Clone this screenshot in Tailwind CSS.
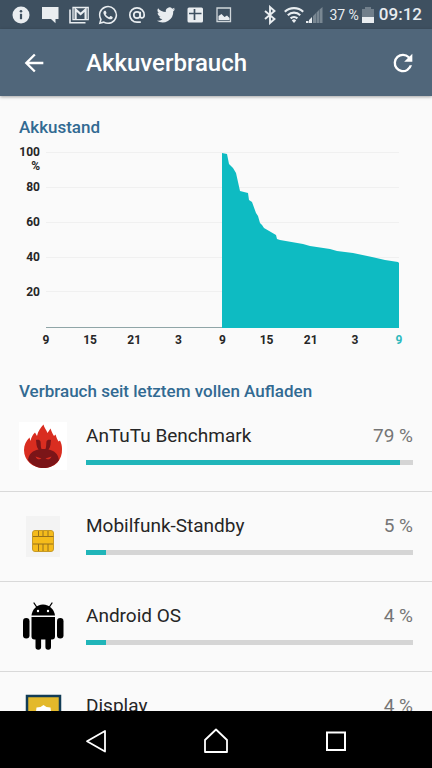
<!DOCTYPE html>
<html lang="de">
<head>
<meta charset="utf-8">
<meta name="viewport" content="width=device-width, initial-scale=1">
<title>Akkuverbrauch</title>
<script src="https://cdn.jsdelivr.net/npm/@tailwindcss/browser@4"></script>
</head>
<body class="flex h-screen flex-col overflow-hidden bg-[#fafafa] font-['Roboto',sans-serif] text-[#262626]">

<!-- Status bar -->
<div class="flex h-[29px] shrink-0 items-center justify-between bg-[#3e5060] pr-[10px] pl-[11px] text-[#e9edf0]">
  <div class="flex items-center gap-[9px]">
    <svg class="size-5" viewBox="0 0 20 20"><circle cx="10" cy="10" r="8.500" fill="currentColor"/><circle cx="10" cy="6.200" r="1.300" fill="#3e5060"/><path d="M8.900 8.800h2.200v5.400H8.900z" fill="#3e5060"/></svg>
    <svg class="size-5" viewBox="0 0 20 20" fill="currentColor"><path d="M2 2h16.500v12H15.500v4.200L11 14H2z"/></svg>
    <svg class="size-5" viewBox="0 0 20 20" fill="none" stroke="currentColor"><path d="M1 4.500v13.200h15.500" stroke-width="1.600"/><path d="M4 2.500h15.200v12.200H4z" stroke-width="1.300"/><path d="M6.600 14.500V4.500l5 4.500 5-4.500v10" stroke-width="2.200"/></svg>
    <svg class="size-5" viewBox="-1 -1 26 26" fill="currentColor"><path d="M17.470 14.380c-.3-.15-1.760-.87-2.030-.97-.27-.1-.47-.15-.67.150-.2.300-.77.970-.94 1.160-.17.200-.35.220-.64.080-.3-.15-1.260-.46-2.390-1.480-.88-.79-1.480-1.760-1.650-2.060-.17-.3-.02-.46.130-.61.130-.13.300-.35.450-.52.150-.17.200-.3.300-.5.100-.2.050-.37-.03-.52-.07-.15-.67-1.610-.92-2.210-.24-.58-.49-.5-.67-.51l-.57-.01c-.2 0-.52.070-.79.370-.27.300-1.040 1.020-1.040 2.480s1.070 2.880 1.210 3.070c.15.200 2.100 3.200 5.080 4.490.71.300 1.260.490 1.690.620.71.230 1.360.200 1.870.120.570-.09 1.760-.72 2.010-1.410.25-.69.250-1.290.170-1.410-.07-.13-.27-.2-.57-.35M12.050 21.790a9.870 9.870 0 0 1-5.030-1.380l-.36-.21-3.740.980 1-3.650-.24-.37a9.860 9.860 0 1 1 8.370 4.630M20.460 3.490A11.820 11.820 0 0 0 12.050 0C5.500 0 .160 5.330.160 11.890c0 2.100.55 4.140 1.590 5.950L.060 24l6.300-1.650a11.880 11.880 0 0 0 5.680 1.450c6.550 0 11.890-5.330 11.890-11.890a11.820 11.820 0 0 0-3.480-8.410z"/></svg>
    <svg class="size-5" viewBox="0 0 20 20" fill="none" stroke="currentColor" stroke-width="1.700"><circle cx="10" cy="10" r="3.200"/><path d="M13.200 6.800v4.200c0 2.800 4 2.600 4-1a7.200 7.200 0 1 0-7.200 7.200h3.800"/></svg>
    <svg class="size-5" viewBox="0 0 24 24" fill="currentColor"><path d="M23 5.100a9 9 0 0 1-2.600.7 4.500 4.500 0 0 0 2-2.500 9 9 0 0 1-2.900 1.100 4.500 4.500 0 0 0-7.700 4.100A12.800 12.800 0 0 1 2.500 3.800a4.500 4.500 0 0 0 1.400 6 4.500 4.500 0 0 1-2-.6c0 2.200 1.500 4.100 3.600 4.600a4.500 4.500 0 0 1-2 .1 4.500 4.500 0 0 0 4.200 3.100A9 9 0 0 1 1 18.900a12.800 12.800 0 0 0 19.700-11.400A9 9 0 0 0 23 5.100z"/></svg>
    <svg class="size-5" viewBox="0 0 20 20"><rect x="2.500" y="2.500" width="15.500" height="15" rx="1.500" fill="currentColor"/><path d="M9.500 4v11M4 8.500h12.500" stroke="#3e5060" stroke-width="1.700"/></svg>
    <svg class="size-5" viewBox="0 0 20 20"><path d="M3 3h13.500v13.500H3z" fill="none" stroke="currentColor" stroke-width="1.300" opacity=".85"/><path d="M4.500 15V11l3-2 3 3 2.500-1.500 2.500 2.500v2z" fill="currentColor"/></svg>
  </div>
  <div class="flex items-center">
    <svg class="mr-[6px] h-5 w-4" viewBox="0 0 16 20" fill="none" stroke="currentColor" stroke-width="1.900"><path d="M3 6l9.500 8L8 18V2l4.500 4L3 14"/></svg>
    <svg class="mr-[2px] size-5" viewBox="0 0 20 20" fill="none" stroke="currentColor" stroke-width="2.200"><path d="M.8 6.800a13.500 13.500 0 0 1 18.400 0M3.800 10.200a9 9 0 0 1 12.400 0M6.600 13.400a5 5 0 0 1 6.800 0"/><path d="M10 18l-2.200-2.500a3 3 0 0 1 4.400 0z" fill="currentColor" stroke="none"/></svg>
    <svg class="mr-[6px] h-5 w-[17px]" viewBox="0 0 17 20" fill="currentColor"><path d="M0 16h2.500v2H0zM3 15l3-3v6H3z"/><path d="M7 11l3-3v10H7zM10.500 7.500l2.500-2.500v13h-2.500zM13.500 4.500L16.500 2v16h-3z" opacity=".35"/></svg>
    <span class="mr-[3px] text-sm">37 %</span>
    <svg class="mr-[5px] h-5 w-3" viewBox="0 0 12 20" fill="currentColor"><path d="M3 2h6v2h3v8H0V4h3z" opacity=".3"/><path d="M0 12h12v6H0z"/></svg>
    <span class="text-[17px] font-medium">09:12</span>
  </div>
</div>

<!-- App bar -->
<header class="z-10 flex h-[67px] shrink-0 items-center bg-[#50667a] pr-[15px] pl-5 text-white shadow-[0_1px_3px_rgba(0,0,0,0.35)]">
  <button type="button" aria-label="Zurück" class="mr-[38px] flex size-7 items-center justify-center">
    <svg class="size-7" viewBox="0 0 24 24" fill="currentColor"><path d="M20 11H7.830l5.590-5.590L12 4l-8 8 8 8 1.410-1.410L7.830 13H20z"/></svg>
  </button>
  <h1 class="flex-1 text-2xl font-medium">Akkuverbrauch</h1>
  <button type="button" aria-label="Aktualisieren" class="flex size-7 items-center justify-center">
    <svg class="size-7" viewBox="0 0 24 24" fill="currentColor"><path d="M17.650 6.350A7.960 7.960 0 0 0 12 4a8 8 0 1 0 7.730 10h-2.080A6 6 0 1 1 12 6c1.660 0 3.140.69 4.220 1.780L13 11h7V4z"/></svg>
  </button>
</header>

<main class="min-h-0 flex-1 overflow-hidden">
  <section aria-labelledby="level" class="pt-5">
    <h2 id="level" class="px-[19px] text-[17px] leading-[22px] font-medium text-[#326a92]">Akkustand</h2>
    <div class="mt-[7px] flex pr-[33px] pl-[17px] text-xs leading-[14px] font-bold">
      <div class="w-[23px] shrink-0 text-right">
        <div class="h-[35px]">100<br>%</div>
        <div class="h-[35px]">80</div>
        <div class="h-[35px]">60</div>
        <div class="h-[35px]">40</div>
        <div class="h-[35px]">20</div>
      </div>
      <div class="ml-[6px] min-w-0 flex-1 pt-[7px]">
        <svg class="block h-[176px] w-full" viewBox="0 0 353 176" preserveAspectRatio="none" role="img" aria-label="Akkustand in Prozent">
          <path d="M0 .5h353M0 35.500h353M0 70.500h353M0 105.500h353M0 139.500h353" stroke="#f0f0f0"/>
          <path d="M0 175.500h353" stroke="#8fa5a7"/>
          <path d="M176 176V1L181 2 183 12 187 16 190 21 194 39 202 41 203 48 206 50 210 61 212 64 214 71 216 73 218 76 230 83 231 87 234 88 257 92 264 94 284 97 291 99 307 101 326 105 339 108 352 110 353 111V176z" fill="#0ebbc2"/>
        </svg>
        <div class="mt-[5px] flex justify-between">
          <span class="flex w-0 justify-center">9</span>
          <span class="flex w-0 justify-center">15</span>
          <span class="flex w-0 justify-center">21</span>
          <span class="flex w-0 justify-center">3</span>
          <span class="flex w-0 justify-center">9</span>
          <span class="flex w-0 justify-center">15</span>
          <span class="flex w-0 justify-center">21</span>
          <span class="flex w-0 justify-center">3</span>
          <span class="flex w-0 justify-center text-[#2fb9bd]">9</span>
        </div>
      </div>
    </div>
  </section>

  <section aria-labelledby="usage" class="pt-[33px]">
    <h2 id="usage" class="px-[19px] text-[17px] leading-[22px] font-medium text-[#326a92]">Verbrauch seit letztem vollen Aufladen</h2>
    <ul>
      <li class="flex h-[90px] border-b border-[#d9d9d9] px-[19px]">
        <svg class="mt-5 mr-[19px] size-12 shrink-0" viewBox="0 0 48 48"><path d="M0 0h48v48H0z" fill="#fff"/><path d="M24.500 46C13 46 5 38 5 28c0-5 2-9 5.500-12.500l1 3.500c1-4 2-6 4.500-8.500l2 3.500c1-5 3.500-8 6.500-11.500.5 3 2.500 5 4 8.500l3-4.500c1 3 2 5 3.500 7.500l1.500-1.500c1 3 1.500 4.500 3 7l1.500-1c1.500 3 2 5.500 2 8.500C43.500 38 36 46 24.500 46z" fill="#d92d20"/><path d="M9 38c1-6.500 5-9.500 10.500-10.500-2.500-3-2-6.500-2.500-9.500 2-.8 4-.3 4.500 1.500.5 2.500 0 5 1 7.500h4c1-2.500.5-5 1-7.500.5-1.800 2.500-2.300 4.500-1.500-.5 3 0 6.500-2.500 9.500C35 28.500 39 31.500 40 38c-4 5.500-9.500 8-15.500 8S13 43.500 9 38z" fill="#7b1518"/><path d="M16.500 34.500l6 2c-1.500 1.500-5 1-6-2zM32.500 34.500l-6 2c1.500 1.500 5 1 6-2z" fill="#d92d20"/></svg>
        <div class="min-w-0 flex-1 pt-[22px]">
          <div class="flex justify-between text-[19px] leading-6"><span>AnTuTu Benchmark</span><span class="text-[#757575]">79 %</span></div>
          <div class="mt-3 h-[5px] bg-[#d5d5d5]"><div class="h-full bg-[#20b5b9]" style="width:96%"></div></div>
        </div>
      </li>
      <li class="flex h-[90px] border-b border-[#d9d9d9] px-[19px]">
        <svg class="mt-5 mr-[19px] size-12 shrink-0" viewBox="0 0 48 48"><path d="M7 4h34v41H7z" fill="#f3f3f3"/><rect x="13.500" y="18.500" width="21" height="21" rx="2.500" fill="#f5bb1a" stroke="#c79a26"/><path d="M14 24.500h5.500M19.500 19v5.500h15M24 19v5.500M29 19v5.500M14 32h20M19.500 32v7M24 32v7M29 32v7" fill="none" stroke="#96701c"/></svg>
        <div class="min-w-0 flex-1 pt-[22px]">
          <div class="flex justify-between text-[19px] leading-6"><span>Mobilfunk-Standby</span><span class="text-[#757575]">5 %</span></div>
          <div class="mt-3 h-[5px] bg-[#d5d5d5]"><div class="h-full bg-[#20b5b9]" style="width:6%"></div></div>
        </div>
      </li>
      <li class="flex h-[90px] border-b border-[#d9d9d9] px-[19px]">
        <svg class="mt-5 mr-[19px] size-12 shrink-0" viewBox="0 0 48 48"><path d="M12.500 13.500C13 8 17.500 2.500 24 2.500S35.500 8 36 13.500z"/><path d="M15 1l3 4.500M33 1l-3 4.500" stroke="#000" stroke-width="1.300" stroke-linecap="round"/><circle cx="19" cy="9" r="1.200" fill="#fff"/><circle cx="29" cy="9" r="1.200" fill="#fff"/><path d="M12.500 15H36V34.500a3 3 0 0 1-3 3h-1V45a2.800 2.800 0 0 1-5.600 0v-7.500h-4.300V45a2.800 2.800 0 0 1-5.600 0v-7.500h-1a3 3 0 0 1-3-3z"/><rect x="4" y="16" width="6.500" height="20.500" rx="3.250"/><rect x="38" y="16" width="6.500" height="20.500" rx="3.250"/></svg>
        <div class="min-w-0 flex-1 pt-[22px]">
          <div class="flex justify-between text-[19px] leading-6"><span>Android OS</span><span class="text-[#757575]">4 %</span></div>
          <div class="mt-3 h-[5px] bg-[#d5d5d5]"><div class="h-full bg-[#20b5b9]" style="width:6%"></div></div>
        </div>
      </li>
      <li class="flex h-[90px] border-b border-[#d9d9d9] px-[19px]">
        <svg class="mt-5 mr-[19px] size-12 shrink-0" viewBox="0 0 48 48"><path d="M8 4h33v41H8z" fill="#e3b92b" stroke="#123c56" stroke-width="2.500"/><path d="M24.500 13l3 2 4 .5.500 4 2.500 3.500-2.500 3.500-.5 4-4 .5-3 2-3-2-4-.5-.5-4-2.500-3.500 2.500-3.500.5-4 4-.5z" fill="#fff"/></svg>
        <div class="min-w-0 flex-1 pt-[22px]">
          <div class="flex justify-between text-[19px] leading-6"><span>Display</span><span class="text-[#757575]">4 %</span></div>
          <div class="mt-3 h-[5px] bg-[#d5d5d5]"><div class="h-full bg-[#20b5b9]" style="width:6%"></div></div>
        </div>
      </li>
    </ul>
  </section>
</main>

<!-- System navigation -->
<nav class="grid h-[57px] shrink-0 grid-cols-3 bg-black px-9 pt-[3px] text-white">
  <button type="button" aria-label="Zurück" class="flex items-center justify-center"><svg class="size-7" viewBox="0 0 28 28" fill="none" stroke="currentColor" stroke-width="1.800" stroke-linejoin="round"><path d="M23 4v20.500L5 14.300z"/></svg></button>
  <button type="button" aria-label="Startbildschirm" class="flex items-center justify-center"><svg class="size-7" viewBox="0 0 28 28" fill="none" stroke="currentColor" stroke-width="1.800" stroke-linejoin="round"><path d="M14 2.500L25 13v12H3V13z"/></svg></button>
  <button type="button" aria-label="Übersicht" class="flex items-center justify-center"><svg class="size-7" viewBox="0 0 28 28" fill="none" stroke="currentColor" stroke-width="2"><path d="M5 5.500h18v17.500H5z"/></svg></button>
</nav>
</body>
</html>
